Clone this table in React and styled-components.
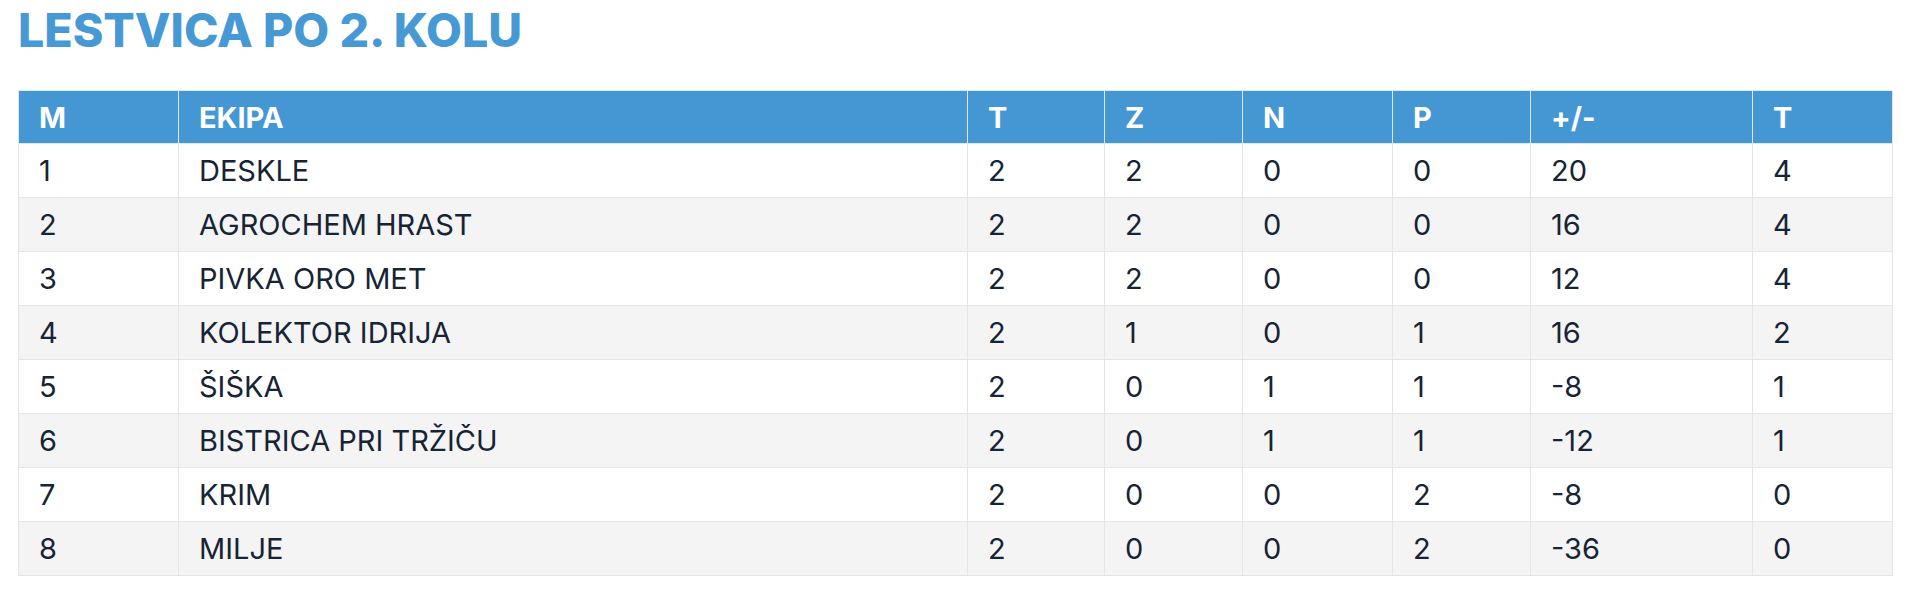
import React from "react";
import styled, { createGlobalStyle } from "styled-components";

const GlobalStyle = createGlobalStyle`
  body {
    margin: 0;
    background: #ffffff;
    font-family: "Inter", "Liberation Sans", sans-serif;
  }
`;

const columns = [
  { label: "M", width: 160 },
  { label: "EKIPA", width: 789 },
  { label: "T", width: 137 },
  { label: "Z", width: 138 },
  { label: "N", width: 150 },
  { label: "P", width: 138 },
  { label: "+/-", width: 222 },
  { label: "T", width: 140 },
];

const standings = [
  [1, "DESKLE", 2, 2, 0, 0, 20, 4],
  [2, "AGROCHEM HRAST", 2, 2, 0, 0, 16, 4],
  [3, "PIVKA ORO MET", 2, 2, 0, 0, 12, 4],
  [4, "KOLEKTOR IDRIJA", 2, 1, 0, 1, 16, 2],
  [5, "ŠIŠKA", 2, 0, 1, 1, -8, 1],
  [6, "BISTRICA PRI TRŽIČU", 2, 0, 1, 1, -12, 1],
  [7, "KRIM", 2, 0, 0, 2, -8, 0],
  [8, "MILJE", 2, 0, 0, 2, -36, 0],
];

const App = () => {
  return (
    <Wrapper>
      <GlobalStyle />
      <Title>LESTVICA PO 2. KOLU</Title>
      <Table>
        <colgroup>
          {columns.map((col, i) => (
            <col key={i} style={{ width: col.width }} />
          ))}
        </colgroup>
        <thead>
          <tr>
            {columns.map((col, i) => (
              <HeadCell key={i}>{col.label}</HeadCell>
            ))}
          </tr>
        </thead>
        <tbody>
          {standings.map((row) => (
            <Row key={row[0]}>
              {row.map((value, i) => (
                <Cell key={i}>{value}</Cell>
              ))}
            </Row>
          ))}
        </tbody>
      </Table>
    </Wrapper>
  );
};

const Wrapper = styled.div`
  padding: 1px 18px 0;
`;

const Title = styled.h2`
  margin: 0;
  font-size: 46.5px;
  line-height: 58px;
  font-weight: 800;
  color: #4699d4;
`;

const Table = styled.table`
  margin-top: 31px;
  width: 1874px;
  border-collapse: collapse;
  table-layout: fixed;
  border: 1px solid #e2e6eb;
`;

const HeadCell = styled.th`
  height: 52px;
  padding: 0 20px;
  background: #4597d3;
  color: #ffffff;
  font-size: 29px;
  font-weight: 700;
  text-align: left;
  border: 1px solid #e2e8ef;
`;

const Row = styled.tr`
  background: #ffffff;
  &:nth-child(even) {
    background: #f4f4f5;
  }
`;

const Cell = styled.td`
  height: 53px;
  padding: 0 20px;
  color: #172435;
  font-size: 29px;
  font-weight: 400;
  text-align: left;
  border: 1px solid #e2e6eb;
`;

export default App;
